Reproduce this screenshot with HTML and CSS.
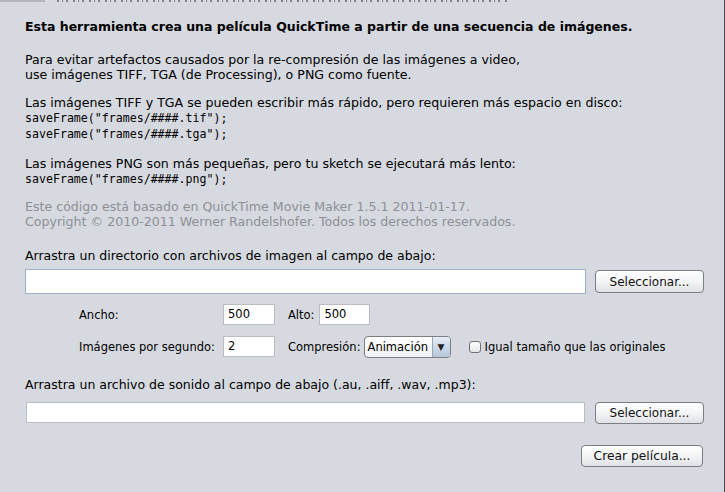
FILE: index.html
```html
<!DOCTYPE html>
<html lang="es">
<head>
<meta charset="utf-8">
<title>QuickTime Movie Maker</title>
<link rel="stylesheet" href="styles.css">
</head>
<body>
<div class="win">
  <div class="topstrip">
    <div class="tab"></div>
    <div class="cut"></div>
  </div>
  <div class="content">
    <div class="title">Esta herramienta crea una película QuickTime a partir de una secuencia de imágenes.</div>
    <div class="para p1">Para evitar artefactos causados por la re-compresión de las imágenes a video,<br>use imágenes TIFF, TGA (de Processing), o PNG como fuente.</div>
    <div class="para p2">Las imágenes TIFF y TGA se pueden escribir más rápido, pero requieren más espacio en disco:<br><span class="code">saveFrame("frames/####.tif");</span><br><span class="code">saveFrame("frames/####.tga");</span></div>
    <div class="para p3">Las imágenes PNG son más pequeñas, pero tu sketch se ejecutará más lento:<br><span class="code">saveFrame("frames/####.png");</span></div>
    <div class="para gray">Este código está basado en QuickTime Movie Maker 1.5.1 2011-01-17.<br>Copyright © 2010-2011 Werner Randelshofer. Todos los derechos reservados.</div>

    <div class="label l1">Arrastra un directorio con archivos de imagen al campo de abajo:</div>
    <div class="fieldrow r1">
      <div class="field big focused"></div>
      <div class="btn sel">Seleccionar...</div>
    </div>

    <div class="opts">
      <div class="optrow o1">
        <span class="olabel">Ancho:</span>
        <div class="field small">500</div>
        <span class="ilabel">Alto:</span>
        <div class="field small alt">500</div>
      </div>
      <div class="optrow o2">
        <span class="olabel">Imágenes por segundo:</span>
        <div class="field small">2</div>
        <span class="ilabel">Compresión:</span>
        <div class="combo"><span class="ctext">Animación</span><span class="carrow">&#9660;</span></div>
        <span class="check"></span>
        <span class="clabel">Igual tamaño que las originales</span>
      </div>
    </div>

    <div class="label l2">Arrastra un archivo de sonido al campo de abajo (.au, .aiff, .wav, .mp3):</div>
    <div class="fieldrow r2">
      <div class="field big2"></div>
      <div class="btn sel">Seleccionar...</div>
    </div>

    <div class="actions">
      <div class="btn create">Crear película...</div>
    </div>
  </div>
</div>
</body>
</html>
```

FILE: styles.css
```css
html, body {
  margin: 0;
  padding: 0;
}
body {
  width: 725px;
  height: 492px;
  overflow: hidden;
  background: #d6d9df;
  font-family: "DejaVu Sans", sans-serif;
  font-size: 12.6px;
  color: #000;
}
.win {
  width: 724px;
  height: 492px;
  border-right: 1px solid #4a4c50;
}
.topstrip {
  height: 3px;
  overflow: hidden;
  display: flex;
  align-items: flex-start;
}
.tab {
  width: 45px;
  height: 2px;
  background: #b3b6be;
  flex: none;
}
.cut {
  margin-left: 12px;
  width: 450px;
  height: 2px;
  background: repeating-linear-gradient(90deg, #6a6c70 0 2px, transparent 2px 5px, #6a6c70 5px 6px, transparent 6px 9px, #6a6c70 9px 11px, transparent 11px 16px);
  opacity: 0.8;
}
.content {
  padding-left: 25px;
}
.title {
  margin-top: 16px;
  font-weight: bold;
  font-size: 12.5px;
  line-height: 15px;
  white-space: nowrap;
}
.para {
  line-height: 15px;
  white-space: nowrap;
}
.p1 { margin-top: 18px; }
.p2 { margin-top: 13px; }
.p3 { margin-top: 14px; }
.gray { margin-top: 12px; color: #8e9095; }
.code {
  font-family: "DejaVu Sans Mono", monospace;
  font-size: 11.6px;
}
.label {
  line-height: 15px;
  white-space: nowrap;
  font-size: 12.5px;
}
.l1 { margin-top: 19px; }
.l2 { margin-top: 20px; }
.fieldrow {
  display: flex;
  align-items: center;
}
.r1 { margin-top: 6px; height: 25px; }
.r2 { margin-top: 10px; height: 21px; }
.field {
  box-sizing: border-box;
  background: #fff;
  border: 1px solid #b9bdc3;
  line-height: 19px;
  padding-left: 4px;
  font-size: 11.5px;
}
.big {
  width: 561px;
  height: 25px;
}
.focused {
  border-color: #9fb1c8;
}
.big2 {
  width: 559px;
  height: 21px;
  margin-left: 1px;
}
.btn {
  box-sizing: border-box;
  height: 23px;
  border: 1px solid #7b7e84;
  border-radius: 4px;
  background: linear-gradient(#ffffff, #f3f4f6 50%, #dfe1e5);
  display: flex;
  align-items: center;
  justify-content: center;
  white-space: nowrap;
  color: #111;
  font-size: 12px;
}
.sel {
  width: 109px;
  margin-left: 9px;
}
.r2 .sel { margin-left: 10px; height: 22px; }
.opts {
  padding-left: 54px;
  font-size: 11.5px;
}
.optrow {
  display: flex;
  align-items: center;
  height: 21px;
}
.o1 { margin-top: 10px; }
.o2 { margin-top: 11px; }
.olabel {
  width: 144px;
  flex: none;
}
.small {
  width: 52px;
  height: 21px;
  flex: none;
}
.ilabel {
  margin-left: 13px;
}
.alt {
  margin-left: 5px;
  width: 51px;
}
.combo {
  box-sizing: border-box;
  margin-left: 3px;
  width: 87px;
  height: 22px;
  border: 1px solid #7b7e84;
  border-radius: 4px;
  background: linear-gradient(#ffffff, #eef0f3);
  display: flex;
  overflow: hidden;
}
.ctext {
  flex: 1;
  padding-left: 3px;
  line-height: 20px;
}
.carrow {
  width: 17px;
  border-left: 1px solid #9aa6b6;
  background: linear-gradient(#e6edf6, #b5c5d9);
  font-size: 9px;
  line-height: 20px;
  text-align: center;
  color: #222;
}
.check {
  box-sizing: border-box;
  width: 12px;
  height: 12px;
  margin-left: 18px;
  border: 1px solid #6f7379;
  border-radius: 3px;
  background: linear-gradient(#ffffff, #e4e6ea);
}
.clabel {
  margin-left: 4px;
  white-space: nowrap;
}
.actions {
  display: flex;
  justify-content: flex-end;
  margin-top: 22px;
  padding-right: 21px;
}
.create {
  width: 122px;
  height: 22px;
  font-size: 12.3px;
}
```
